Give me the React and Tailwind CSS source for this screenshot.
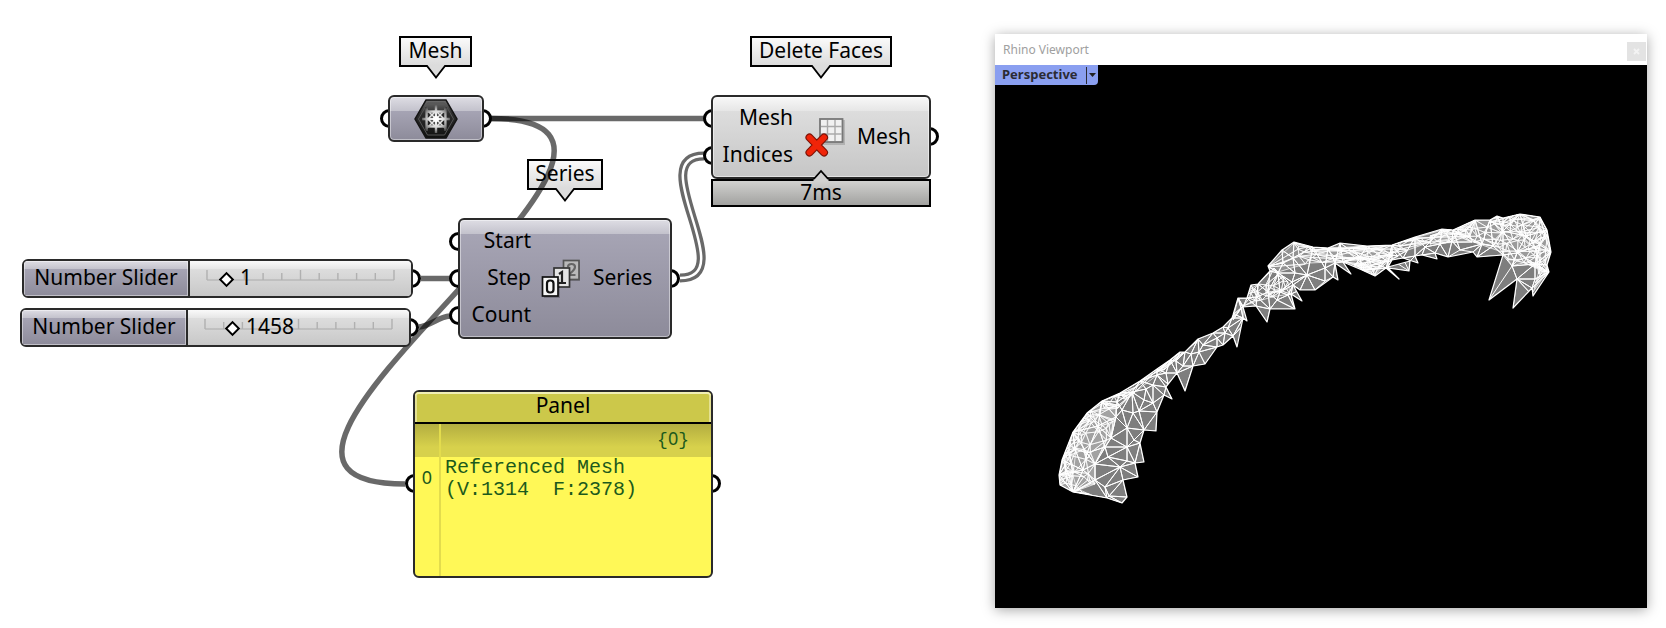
import React from "react";

/* ---------- canvas pieces ---------- */

function Tag({ className, children }) {
  return (
    <div
      className={`absolute flex h-[31px] items-center justify-center border-2 border-black bg-linear-to-b from-[#fafafa] to-[#dcdcdc] pb-1 ${className}`}
    >
      <span>{children}</span>
      <svg className="absolute top-[27px] left-1/2 h-[14px] w-5 -translate-x-1/2" viewBox="0 0 20 14" aria-hidden="true">
        <path d="M1 0H19V2L10 12.5L1 2Z" fill="#dcdcdc" />
        <path d="M0 1H1L10 12.5L19 1H20" fill="none" stroke="#000" strokeWidth="1.8" />
      </svg>
    </div>
  );
}

function Port({ className }) {
  return <span className={`absolute size-[19px] rounded-full border-[3px] border-black bg-white ${className}`} />;
}

const shell = "relative size-full overflow-hidden rounded-md border-2 border-[#2a2a2a]";
const purple =
  "bg-[linear-gradient(to_bottom,#dedde4_0,#c3c2cc_14px,#a6a4b4_14px,#8d8b9a_100%)] shadow-[inset_0_0_0_1px_rgba(255,255,255,0.45)]";
const silver =
  "bg-[linear-gradient(to_bottom,#f8f8f8_0,#e6e6e6_14px,#dddddd_14px,#c6c6c6_100%)] shadow-[inset_0_0_0_1px_rgba(255,255,255,0.5)]";

function Ruler() {
  const ticks = Array.from({ length: 11 }, (_, i) => i);
  return (
    <svg className="absolute top-2 left-4 h-3 w-[189px]" viewBox="0 0 189 12" aria-hidden="true">
      <path d="M1 11H188" stroke="#b9b9b9" strokeWidth="1.4" />
      {ticks.map((i) => (
        <path key={i} d={`M${1 + i * 18.7} ${i % 5 ? 4 : 1}V11`} stroke="#b0b0b0" strokeWidth="1.4" />
      ))}
    </svg>
  );
}

function NumberSlider({ id, className, value, max, valueClass }) {
  return (
    <div className={`absolute h-[39px] w-[391px] ${className}`}>
      <Port className="top-[10px] right-[-8px]" />
      <div className="relative flex size-full overflow-hidden rounded-md border-2 border-[#2a2a2a]">
        <label
          htmlFor={id}
          className="flex w-[166px] items-center justify-center border-r-2 border-[#2a2a2a] bg-[linear-gradient(to_bottom,#dedde4_0,#c3c2cc_8px,#a6a4b4_8px,#8d8b9a_100%)] pb-[3px] shadow-[inset_0_0_0_1px_rgba(255,255,255,0.45)]"
        >
          Number Slider
        </label>
        <div className="relative flex-1 bg-[linear-gradient(to_bottom,#fafafa_0,#e6e6e6_8px,#dddddd_8px,#c8c8c8_100%)]">
          <Ruler />
          <input
            id={id}
            type="range"
            min="0"
            max={max}
            defaultValue={value}
            className="absolute top-3 left-3 h-3 w-[197px] appearance-none bg-transparent [&::-webkit-slider-thumb]:size-[11px] [&::-webkit-slider-thumb]:rotate-45 [&::-webkit-slider-thumb]:appearance-none [&::-webkit-slider-thumb]:border-[2px] [&::-webkit-slider-thumb]:border-black [&::-webkit-slider-thumb]:bg-white"
          />
          <output htmlFor={id} className={`absolute top-[2px] ${valueClass}`}>
            {value}
          </output>
        </div>
      </div>
    </div>
  );
}

function HexMeshIcon() {
  return (
    <svg className="h-10 w-11" viewBox="0 0 44 40" aria-hidden="true">
      <defs>
        <radialGradient id="hexGlow" gradientUnits="userSpaceOnUse" cx="22" cy="20" r="16">
          <stop offset="0" stopColor="#fff" />
          <stop offset="0.5" stopColor="#dcdcdc" />
          <stop offset="0.8" stopColor="#777" />
          <stop offset="1" stopColor="#2c2c2c" />
        </radialGradient>
        <linearGradient id="hexBody" x1="0" y1="0" x2="0" y2="1">
          <stop offset="0" stopColor="#6e6e6e" />
          <stop offset="0.35" stopColor="#2d2d2d" />
          <stop offset="1" stopColor="#111" />
        </linearGradient>
      </defs>
      <path d="M12 1H32L43 20L32 39H12L1 20Z" fill="url(#hexBody)" stroke="#151515" strokeWidth="1.5" />
      <path d="M13.5 4H30.5L39.5 20L30.5 36H13.5L4.500 20Z" fill="none" stroke="#555" strokeWidth="1" />
      <g stroke="url(#hexGlow)" fill="none">
        <path d="M22 6V34M8 20H36M13 12.500H31M13 27.500H31M12.500 8V32M31.500 8V32" strokeWidth="2.400" />
        <path d="M12 10L32 30M32 10L12 30M22 12L30 20L22 28L14 20Z" strokeWidth="1.600" />
      </g>
      <circle cx="22" cy="20" r="3" fill="#fff" />
    </svg>
  );
}

function DeleteFacesIcon() {
  return (
    <svg className="h-10 w-10" viewBox="0 0 40 40" aria-hidden="true">
      <rect x="16" y="3" width="24" height="25" fill="#000" opacity="0.15" />
      <rect x="15" y="2" width="22.500" height="23" fill="#f1f1f1" stroke="#777" strokeWidth="1.800" />
      <path d="M22.500 3V24M30 3V24M16 9.500H37M16 17H37" stroke="#aaa" strokeWidth="1.400" />
      <path d="M4.500 20.500L19 35.500M19 20.500L4.500 35.500" stroke="#7d1206" strokeWidth="8" strokeLinecap="round" />
      <path d="M4.500 20.500L19 35.500M19 20.500L4.500 35.500" stroke="#f02408" strokeWidth="5.800" strokeLinecap="round" />
    </svg>
  );
}

function SeriesIcon() {
  return (
    <svg className="h-10 w-10" viewBox="0 0 40 40" aria-hidden="true">
      <g strokeWidth="1.700">
        <rect x="23" y="3" width="16" height="19" fill="#000" stroke="none" opacity="0.2" />
        <rect x="22.500" y="1.500" width="15.500" height="19" fill="#b9b9b9" stroke="#555" />
        <path d="M27 8Q27 5 30.500 5T34 8Q34 11 27 16H34.500" fill="none" stroke="#666" strokeWidth="2.200" />
        <rect x="13" y="9" width="15.500" height="19" fill="#e4e4e4" stroke="#333" />
        <path d="M18 15L21 13V24M17.500 24H25" fill="none" stroke="#222" strokeWidth="2.200" />
        <rect x="3" y="20" width="16" height="19" fill="#000" stroke="none" opacity="0.2" />
        <rect x="1.500" y="18" width="15.500" height="19" fill="#f6f6f6" stroke="#111" />
        <rect x="6" y="21.500" width="6.500" height="12" rx="3" fill="none" stroke="#111" strokeWidth="2.200" />
      </g>
    </svg>
  );
}

function Wires() {
  return (
    <svg className="absolute inset-0 size-full" aria-hidden="true">
      <g fill="none" stroke="#000" strokeOpacity="0.59" strokeWidth="5.500">
        <path d="M491 118.500H704" />
        <path d="M491 118.500C740 118.500 156 484 405 484" />
        <path d="M421 278.500H450" />
        <path d="M419 327C430 326 438 317 450 316" />
      </g>
      <path d="M680 278C742 278 642 156 704 156" fill="none" stroke="#696969" strokeWidth="9" />
      <path d="M680 278C742 278 642 156 704 156" fill="none" stroke="#fff" strokeWidth="2.500" />
    </svg>
  );
}

function Canvas() {
  return (
    <section aria-label="Definition canvas" className="relative w-[956px] shrink-0 font-['Noto_Sans',sans-serif] text-[21px] leading-7 text-black">
      <Tag className="top-9 left-[399px] w-[73px]">Mesh</Tag>
      <Tag className="top-9 left-[750px] w-[142px]">Delete Faces</Tag>
      <Tag className="top-[159px] left-[527px] w-[76px]">Series</Tag>
      <Wires />

      <div className="absolute top-[95px] left-[388px] h-[47px] w-[96px]">
        <Port className="top-[14px] left-[-8px]" />
        <Port className="top-[14px] right-[-8px]" />
        <div className={`${shell} ${purple} flex items-center justify-center`}>
          <HexMeshIcon />
        </div>
      </div>

      <div className="absolute top-[95px] left-[711px] w-[220px]">
        <div className="relative h-[84px]">
          <Port className="top-[14px] left-[-8px]" />
          <Port className="top-[51px] left-[-8px]" />
          <Port className="top-[32px] right-[-8px]" />
          <div className={`${shell} ${silver} flex items-center`}>
            <div className="flex w-20 shrink-0 flex-col gap-[9px] pb-[3px] text-right">
              <span>Mesh</span>
              <span>Indices</span>
            </div>
            <div className="mr-3 ml-3">
              <DeleteFacesIcon />
            </div>
            <span className="pb-[3px]">Mesh</span>
          </div>
        </div>
        <div className="relative flex h-[28px] items-center justify-center border-2 border-black bg-linear-to-b from-[#d2d2d0] to-[#a2a2a0]">
          <svg className="absolute -top-[12px] left-1/2 h-3 w-5 -translate-x-1/2" viewBox="0 0 20 12" aria-hidden="true">
            <path d="M1 12L10 2L19 12Z" fill="#d0d0d0" stroke="#000" strokeWidth="1.800" />
            <path d="M2.500 12H17.500" stroke="#d2d2d0" strokeWidth="3" />
          </svg>
          <span className="pb-[3px]">7ms</span>
        </div>
      </div>

      <NumberSlider id="step" className="top-[259px] left-[22px]" value={1} max={10} valueClass="left-[50px]" />
      <NumberSlider id="count" className="top-[308px] left-5" value={1458} max={9999} valueClass="left-[58px]" />

      <div className="absolute top-[218px] left-[458px] h-[121px] w-[214px]">
        <Port className="top-[14px] left-[-9px]" />
        <Port className="top-[51px] left-[-9px]" />
        <Port className="top-[88px] left-[-9px]" />
        <Port className="top-[51px] right-[-8px]" />
        <div className={`${shell} ${purple} flex items-center`}>
          <div className="flex w-[71px] shrink-0 flex-col gap-[9px] pb-[3px] text-right">
            <span>Start</span>
            <span>Step</span>
            <span>Count</span>
          </div>
          <div className="mr-3 ml-[10px]">
            <SeriesIcon />
          </div>
          <span className="pb-[3px]">Series</span>
        </div>
      </div>

      <div className="absolute top-[390px] left-[413px] h-[188px] w-[300px]">
        <Port className="top-[84px] left-[-8px]" />
        <Port className="top-[84px] right-[-8px]" />
        <div className="relative flex size-full flex-col overflow-hidden rounded-md border-2 border-[#2a2a2a] bg-[#fff857]">
          <h2 className="flex h-[32px] items-center justify-center rounded-t border-b-2 border-black bg-[#ccc84a] pb-1 shadow-[inset_0_2px_0_0_#f1efb4,inset_2px_0_0_0_#e4e192,inset_-2px_0_0_0_#e4e192]">
            Panel
          </h2>
          <div className="flex flex-1 font-['Liberation_Mono',monospace] text-[20px] leading-[22px] text-[#1c5a1c]">
            <div className="flex w-[26px] flex-col border-r-2 border-[#e3dc4d]">
              <div className="h-[33px] bg-linear-to-b from-[#b3ae40] to-[#d7d14c] to-70%" />
              <span className="pt-[9px] text-center font-['Noto_Sans',sans-serif] text-[18px]">0</span>
            </div>
            <div className="flex-1">
              <div className="flex h-[33px] items-center justify-end bg-linear-to-b from-[#b3ae40] to-[#d7d14c] to-70% pr-[22px] pb-1">
                <span className="text-[18px]">
                  {"{"}
                  <span className="font-['Noto_Sans',sans-serif]">0</span>
                  {"}"}
                </span>
              </div>
              <p className="pl-1 whitespace-pre">{"Referenced Mesh\n(V:1314  F:2378)"}</p>
            </div>
          </div>
        </div>
      </div>
    </section>
  );
}

/* ---------- viewport mesh ---------- */

const outline = [
  [1059, 475], [1062, 460], [1073, 432], [1087, 413], [1102, 401], [1120, 393], [1140, 381], [1157, 369], [1170, 360],
  [1180, 352], [1185, 352], [1198, 339], [1213, 333], [1223, 327], [1232, 318], [1233, 315], [1238, 298], [1247, 298],
  [1251, 285], [1258, 284], [1270, 271], [1268, 266], [1282, 250], [1294, 242], [1313, 247], [1328, 248], [1340, 243],
  [1367, 246], [1392, 245], [1415, 237], [1442, 229], [1453, 230], [1475, 220], [1490, 220], [1497, 216], [1503, 218],
  [1520, 214], [1540, 217], [1547, 230], [1551, 252], [1547, 265], [1549, 272], [1533, 296], [1532, 288], [1513, 308],
  [1517, 279], [1489, 300], [1503, 255], [1477, 257], [1473, 252], [1448, 257], [1435, 253], [1437, 259], [1422, 255],
  [1415, 256], [1418, 263], [1403, 258], [1392, 260], [1388, 267], [1410, 261], [1409, 271], [1388, 268], [1399, 279],
  [1386, 268], [1375, 276], [1362, 270], [1343, 262], [1351, 274], [1335, 263], [1338, 280], [1333, 277], [1315, 290],
  [1300, 290], [1293, 285], [1302, 301], [1291, 294], [1295, 309], [1270, 309], [1267, 322], [1256, 306], [1243, 307],
  [1247, 321], [1243, 318], [1237, 347], [1233, 336], [1223, 345], [1217, 347], [1205, 364], [1193, 366], [1185, 391],
  [1177, 373], [1166, 387], [1172, 399], [1164, 395], [1157, 412], [1156, 431], [1144, 430], [1140, 443], [1144, 462],
  [1135, 463], [1138, 477], [1123, 480], [1127, 497], [1122, 503], [1107, 498], [1073, 492], [1060, 485],
];

const inner = [
  [1127, 428], [1127, 447], [1134, 440], [1127, 461], [1105, 447], [1108, 457], [1095, 464], [1120, 467], [1105, 487],
  [1109, 496], [1139, 411], [1144, 400], [1153, 385], [1153, 403], [1168, 384], [1157, 375], [1133, 413], [1122, 410],
  [1117, 402], [1132, 392], [1111, 438], [1116, 417], [1095, 480], [1087, 453], [1098, 426], [1083, 470], [1075, 449],
  [1176, 361], [1183, 366], [1191, 354], [1199, 352], [1203, 345], [1217, 338], [1225, 333], [1228, 328], [1236, 315],
  [1241, 308], [1146, 389], [1166, 373], [1307, 275], [1325, 268], [1295, 273], [1292, 282], [1278, 273], [1268, 292],
  [1280, 292], [1277, 300], [1288, 295], [1257, 297], [1293, 258], [1283, 263], [1325, 281], [1388, 262], [1360, 257],
  [1440, 244], [1452, 241], [1460, 250], [1425, 247], [1482, 244], [1503, 231], [1517, 253], [1512, 266], [1535, 264],
  [1540, 245], [1526, 236], [1493, 246], [1535, 279],
];

// Overlapping surface sheets; `stretch` lengthens the triangles along x.
const sheets = [
  { seed: 7, count: 42, stretch: 1, fill: 0.28, shape: [[1059, 475], [1062, 460], [1073, 432], [1087, 413], [1102, 401], [1116, 405], [1115, 420], [1111, 438], [1095, 464], [1095, 484], [1073, 492], [1060, 485]] },
  { seed: 21, count: 28, stretch: 1, fill: 0, shape: [[1059, 475], [1064, 452], [1073, 432], [1087, 413], [1090, 420], [1076, 450], [1073, 476], [1080, 490], [1107, 498], [1122, 503], [1073, 492], [1060, 485]] },
  { seed: 5, count: 22, stretch: 2, fill: 0, shape: [[1087, 413], [1102, 401], [1140, 381], [1180, 352], [1198, 340], [1165, 369], [1135, 392], [1118, 408]] },
  { seed: 9, count: 22, stretch: 1, fill: 0, shape: [[1233, 320], [1238, 298], [1258, 284], [1274, 268], [1288, 282], [1290, 294], [1262, 300], [1243, 306]] },
  { seed: 13, count: 38, stretch: 3, fill: 0.15, shape: [[1268, 267], [1294, 243], [1328, 248], [1392, 245], [1392, 256], [1375, 275], [1345, 262], [1310, 263], [1278, 272]] },
  { seed: 17, count: 42, stretch: 4, fill: 0.1, shape: [[1310, 250], [1360, 247], [1415, 238], [1442, 230], [1475, 221], [1470, 236], [1430, 242], [1398, 256], [1372, 276], [1340, 258]] },
  { seed: 31, count: 75, stretch: 1.4, fill: 0.22, shape: [[1430, 236], [1475, 220], [1520, 214], [1540, 217], [1547, 230], [1551, 252], [1547, 272], [1533, 292], [1528, 262], [1512, 266], [1502, 252], [1472, 242], [1430, 244]] },
  { seed: 43, count: 28, stretch: 1, fill: 0, shape: [[1490, 222], [1520, 214], [1540, 217], [1550, 250], [1547, 270], [1534, 288], [1536, 250], [1520, 232]] },
];

function contains(shape, x, y) {
  let inside = false;
  for (let i = 0, j = shape.length - 1; i < shape.length; j = i++) {
    const [xi, yi] = shape[i];
    const [xj, yj] = shape[j];
    if (yi > y !== yj > y && x < ((xj - xi) * (y - yi)) / (yj - yi) + xi) inside = !inside;
  }
  return inside;
}

function circle(p, a, b, c) {
  const [ax, ay] = p[a];
  const [bx, by] = p[b];
  const [cx, cy] = p[c];
  const d = 2 * (ax * (by - cy) + bx * (cy - ay) + cx * (ay - by)) || 1e-9;
  const a2 = ax * ax + ay * ay;
  const b2 = bx * bx + by * by;
  const c2 = cx * cx + cy * cy;
  const x = (a2 * (by - cy) + b2 * (cy - ay) + c2 * (ay - by)) / d;
  const y = (a2 * (cx - bx) + b2 * (ax - cx) + c2 * (bx - ax)) / d;
  return { v: [a, b, c], x, y, r: (ax - x) ** 2 + (ay - y) ** 2 };
}

// Bowyer-Watson triangulation, keeping the triangles whose centre is in the shape.
function triangulate(points, shape, stretch) {
  const n = points.length;
  const p = points.map(([x, y], i) => [x - 1300 + (i % 7) * 0.01, (y - 350) * stretch + (i % 5) * 0.01]);
  p.push([-9000, -8000], [9000, -8000], [0, 9500]);
  let tris = [circle(p, n, n + 1, n + 2)];
  for (let i = 0; i < n; i++) {
    const edges = new Map();
    tris = tris.filter((t) => {
      if ((p[i][0] - t.x) ** 2 + (p[i][1] - t.y) ** 2 >= t.r) return true;
      [[0, 1], [1, 2], [2, 0]].forEach(([s, e]) => {
        const a = Math.min(t.v[s], t.v[e]);
        const b = Math.max(t.v[s], t.v[e]);
        const key = `${a}-${b}`;
        if (edges.has(key)) edges.delete(key);
        else edges.set(key, [a, b]);
      });
      return false;
    });
    edges.forEach(([a, b]) => tris.push(circle(p, a, b, i)));
  }
  return tris
    .filter(({ v }) => {
      if (v.some((k) => k >= n)) return false;
      const x = (points[v[0]][0] + points[v[1]][0] + points[v[2]][0]) / 3;
      const y = (points[v[0]][1] + points[v[1]][1] + points[v[2]][1]) / 3;
      return contains(shape, x, y);
    })
    .map(({ v }) => `M${v.map((k) => points[k].map((c) => c.toFixed(1)).join(" ")).join("L")}Z`)
    .join("");
}

function scatter({ seed, count, shape }) {
  let s = seed * 7919;
  const rand = () => {
    s = (s * 16807) % 2147483647;
    return s / 2147483647;
  };
  const xs = shape.map((q) => q[0]);
  const ys = shape.map((q) => q[1]);
  const x0 = Math.min(...xs);
  const y0 = Math.min(...ys);
  const w = Math.max(...xs) - x0;
  const h = Math.max(...ys) - y0;
  const found = [];
  for (let i = 0; i < 8000 && found.length < count; i++) {
    const x = x0 + rand() * w;
    const y = y0 + rand() * h;
    if (contains(shape, x, y)) found.push([x, y]);
  }
  return found;
}

const basePath = triangulate([...outline, ...inner], outline, 1);
const sheetPaths = sheets.map((sheet) => ({
  fill: sheet.fill,
  d: triangulate([...sheet.shape, ...scatter(sheet)], sheet.shape, sheet.stretch),
}));
const outlinePath = `M${outline.map((q) => q.join(" ")).join("L")}Z`;

function MeshView() {
  return (
    <svg className="absolute inset-0 size-full" viewBox="995 65 652 543" role="img" aria-label="Perspective mesh">
      <defs>
        <clipPath id="silhouette">
          <path d={outlinePath} />
        </clipPath>
      </defs>
      <g clipPath="url(#silhouette)" strokeLinejoin="round">
        <path d={outlinePath} fill="#7e7e7e" />
        <path d={basePath} fill="none" stroke="#fff" strokeWidth="1" />
        {sheetPaths.map(({ d, fill }, i) => (
          <path key={i} d={d} fill="#fff" fillOpacity={fill} stroke="#fff" strokeWidth="0.8" strokeOpacity="0.9" />
        ))}
      </g>
      <path d={outlinePath} fill="none" stroke="#fff" strokeWidth="1.200" strokeLinejoin="round" />
    </svg>
  );
}

function Viewport() {
  return (
    <section
      aria-label="Rhino Viewport"
      className="mt-[34px] mr-[19px] mb-5 ml-[39px] flex min-h-[400px] flex-1 flex-col bg-white font-['Noto_Sans',sans-serif] shadow-[0_2px_12px_rgba(0,0,0,0.35)]"
    >
      <header className="flex h-[31px] items-center justify-between pr-px pl-2 text-xs text-[#a0a0a0]">
        <h1>Rhino Viewport</h1>
        <button
          type="button"
          aria-label="Close"
          className="mt-[3px] flex size-[19px] items-center justify-center bg-[#e3e3e3]"
        >
          <svg className="size-[7px]" viewBox="0 0 7 7" aria-hidden="true">
            <path d="M1 1L6 6M6 1L1 6" stroke="#f3f3f3" strokeWidth="1.800" />
          </svg>
        </button>
      </header>
      <div className="relative flex-1 bg-black">
        <MeshView />
        <button
          type="button"
          className="relative flex h-5 w-[103px] items-center rounded-br-sm bg-[#8a9ff0] pl-[7px] text-[13px] font-bold text-[#2b2b33]"
        >
          <span className="flex-1 text-left">Perspective</span>
          <span className="h-[17px] w-px bg-[#2b2b33]" />
          <svg className="mx-[2px] h-1 w-[7px]" viewBox="0 0 7 4" aria-hidden="true">
            <path d="M0 0H7L3.500 4Z" fill="#222" />
          </svg>
        </button>
      </div>
    </section>
  );
}

export default function App() {
  return (
    <main className="flex h-screen min-h-[600px] bg-white">
      <Canvas />
      <Viewport />
    </main>
  );
}
